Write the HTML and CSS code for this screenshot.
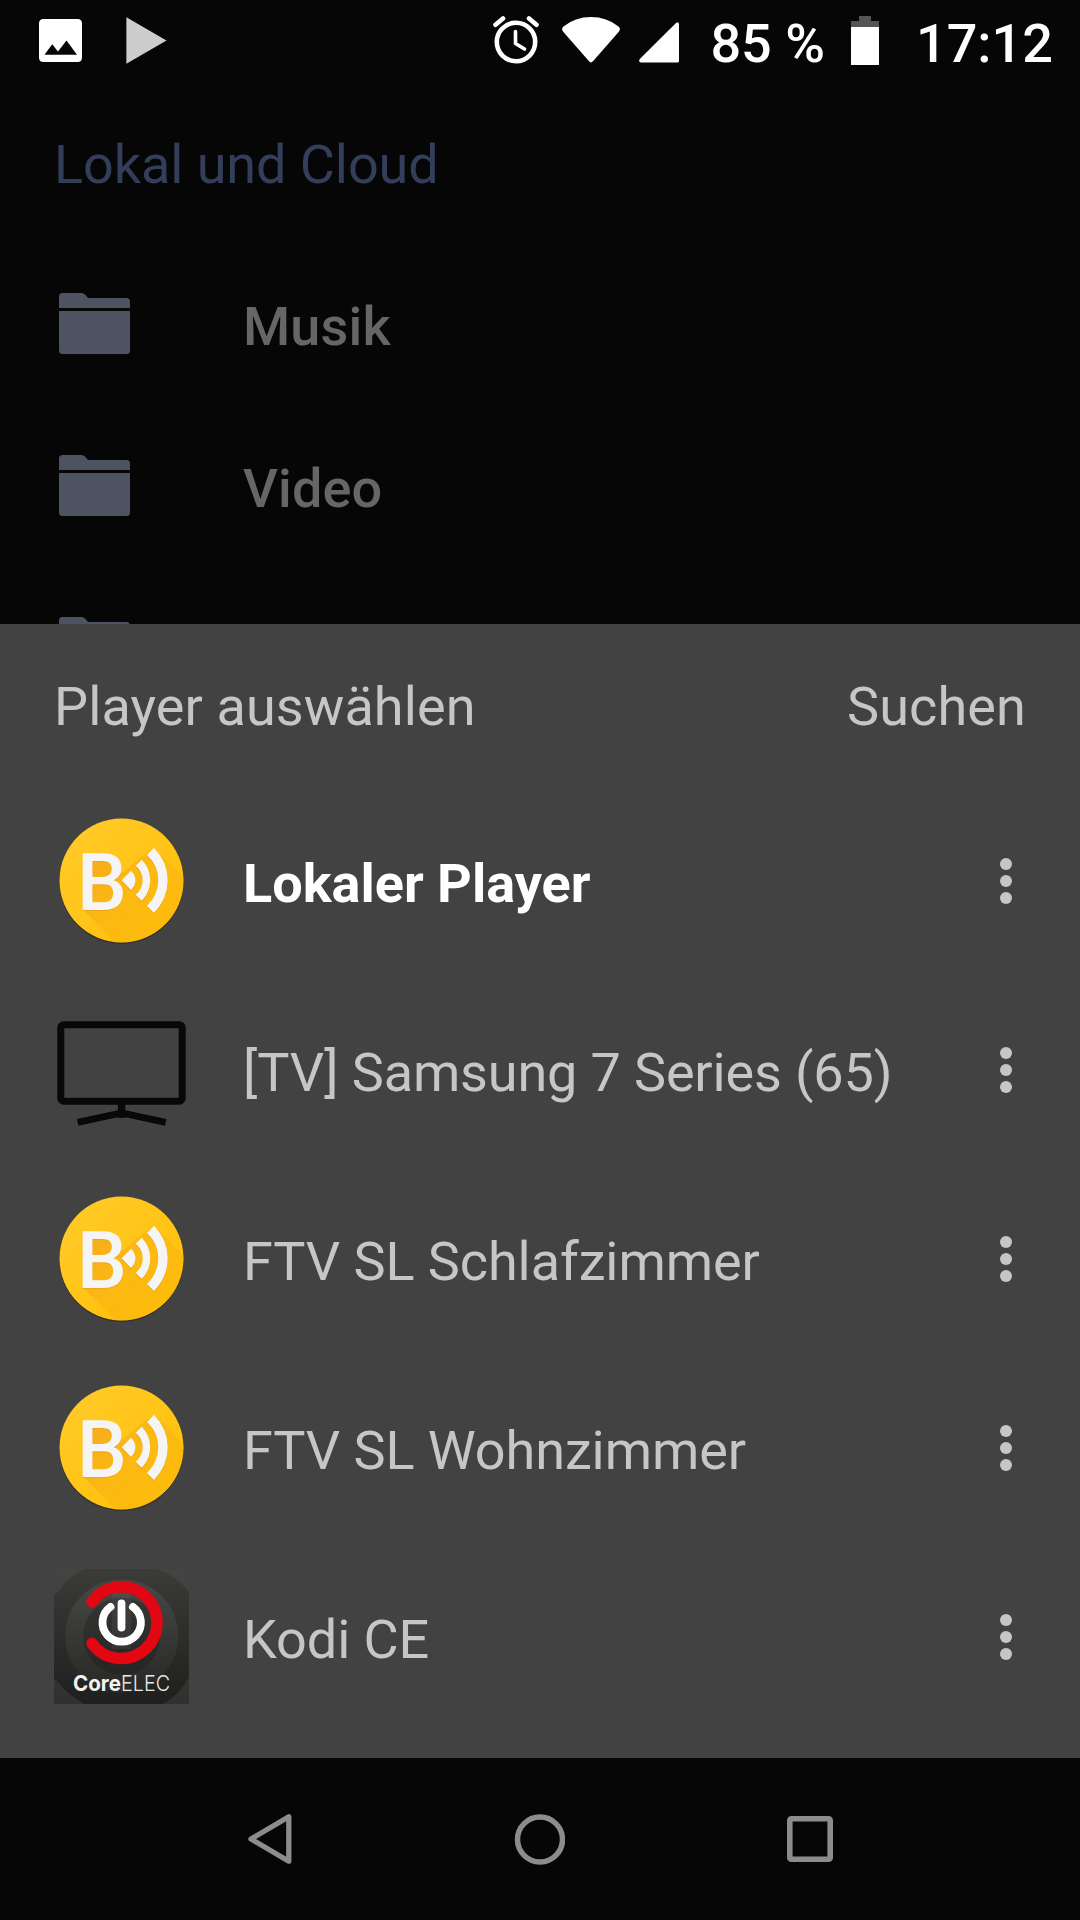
FILE: index.html
```html
<!DOCTYPE html>
<html lang="de">
<head>
<meta charset="utf-8">
<title>Player auswählen</title>
<link rel="stylesheet" href="styles.css">
</head>
<body>
<svg class="defs" width="0" height="0">
  <defs>
    <linearGradient id="gold" x1="0" y1="0" x2="1" y2="1"><stop offset="0.1" stop-color="#ffca28"/><stop offset="0.9" stop-color="#ffbf08"/></linearGradient>
    <linearGradient id="shade" gradientUnits="userSpaceOnUse" x1="35" y1="50" x2="110" y2="110"><stop offset="0" stop-color="#f2a01c" stop-opacity="0.7"/><stop offset="0.5" stop-color="#f7ae10" stop-opacity="0.5"/><stop offset="1" stop-color="#f9b40c" stop-opacity="0.4"/></linearGradient>
    <linearGradient id="slate" x1="0" y1="0" x2="0" y2="1"><stop offset="0" stop-color="#3b3b39"/><stop offset="1" stop-color="#1f1f1e"/></linearGradient>
    <linearGradient id="ring" x1="0" y1="0" x2="0" y2="1"><stop offset="0" stop-color="#454543"/><stop offset="1" stop-color="#2a2a29"/></linearGradient>
    <linearGradient id="tilebg" x1="0" y1="0" x2="0" y2="1"><stop offset="0" stop-color="#444442"/><stop offset="1" stop-color="#30302f"/></linearGradient>
    <clipPath id="disc"><circle cx="67.5" cy="67.5" r="62"/></clipPath>
    <clipPath id="tile"><rect width="135" height="135"/></clipPath>
    <symbol id="folder" viewBox="0 0 71 61">
      <path d="M0 15V3.5Q0 0 3.5 0H22.5Q24.500 0 26 1.500L29 5H67.500Q71 5 71 8.500V15ZM0 18H71V57.500Q71 61 67.500 61H3.500Q0 61 0 57.500Z" fill="#4d5361"/>
    </symbol>
    <symbol id="cast" viewBox="0 0 135 135">
      <circle cx="67.500" cy="69" r="62" fill="#000" opacity="0.18"/>
      <circle cx="67.500" cy="68.300" r="62.300" fill="#2e2a20" opacity="0.5"/>
      <circle cx="67.500" cy="67.500" r="62" fill="url(#gold)"/>
      <g clip-path="url(#disc)">
        <path d="M29 96.500L38 48H58L69 60L82 48L100 34.700L175 109V180H112Z" fill="url(#shade)"/>
      </g>
      <g fill="#e08a10" opacity="0.35" transform="translate(0 1.500)">
        <text class="cast-letter" x="23" y="96.500">B</text>
        <path d="M67.700 67.300L77 57.700Q81.400 62 81.400 67.300T77 77Z"/>
        <path d="M87.700 46.800Q96.200 55.300 96.200 67.300T87.700 87.800L81.700 81.800Q88.700 76 88.700 67.300T81.700 52.800Z"/>
        <path d="M100 34.700Q113.700 49 113.700 67.300T100 100L93 93Q104.300 82 104.300 67.300T93 42Z"/>
      </g>
      <g fill="#f5f5f5">
        <text class="cast-letter" x="23" y="96.500">B</text>
        <path d="M67.700 67.300L77 57.700Q81.400 62 81.400 67.300T77 77Z"/>
        <path d="M87.700 46.800Q96.200 55.300 96.200 67.300T87.700 87.800L81.700 81.800Q88.700 76 88.700 67.300T81.700 52.800Z"/>
        <path d="M100 34.700Q113.700 49 113.700 67.300T100 100L93 93Q104.300 82 104.300 67.300T93 42Z"/>
      </g>
    </symbol>
    <symbol id="dots" viewBox="0 0 12 46"><g fill="#c6c6c6"><circle cx="6" cy="6" r="6"/><circle cx="6" cy="23" r="6"/><circle cx="6" cy="40" r="6"/></g></symbol>
  </defs>
</svg>

<div class="screen">
  <header class="status">
    <div class="status-left">
      <svg width="43" height="43" viewBox="0 0 43 43"><path fill="#fff" fill-rule="evenodd" d="M4.500 0H38.500Q43 0 43 4.500V38.500Q43 43 38.500 43H4.500Q0 43 0 38.500V4.500Q0 0 4.500 0ZM5.500 35.700H38L27.500 21.500L19 32.500L13.200 25.300Z"/></svg>
      <svg width="41" height="47" viewBox="0 0 41 47"><path fill="#cdcdcd" d="M0.400 0.300L40.500 23.500L0.400 46.700Z"/></svg>
    </div>
    <div class="status-right">
      <svg class="alarm" width="46" height="48" viewBox="0 0 46 48" fill="none" stroke="#fff" stroke-linecap="round"><circle cx="23" cy="26" r="19.200" stroke-width="4.600"/><path d="M2.500 8.700L10 2.500M43.500 8.700L36 2.500" stroke-width="4.600"/><path d="M22.500 15.500V27.500L31.500 33" stroke-width="3.600" stroke-linejoin="round"/></svg>
      <svg class="wifi" width="58" height="46" viewBox="0 0 58 46"><path fill="#fff" d="M1 14.500Q-1 11.500 1.500 9.500Q13 0 29 0T56.500 9.500Q59 11.500 57 14.500L31 44.300Q29 46.500 27 44.300Z"/></svg>
      <svg class="signal" width="40" height="41" viewBox="0 0 40 41"><path fill="#fff" d="M40 2V39Q40 40.500 38.500 40.500H2Q-1 40 0.800 37L37 1Q39.500-0.800 40 2Z"/></svg>
      <span class="percent">85 %</span>
      <svg class="battery" width="28" height="49" viewBox="0 0 28 49"><path fill="#555" d="M8 0H20V5H28V11H0V5H8Z"/><path fill="#fff" d="M0 11H28V49H0Z"/></svg>
      <span class="clock">17:12</span>
    </div>
  </header>

  <main class="library">
    <h1 class="section-title">Lokal und Cloud</h1>
    <div class="folder-row"><svg width="71" height="61"><use href="#folder"/></svg><span>Musik</span></div>
    <div class="folder-row"><svg width="71" height="61"><use href="#folder"/></svg><span>Video</span></div>
    <div class="folder-row"><svg width="71" height="61"><use href="#folder"/></svg></div>
  </main>

  <section class="sheet">
    <div class="sheet-head"><span>Player auswählen</span><span>Suchen</span></div>
    <div class="player active"><svg width="135" height="135"><use href="#cast"/></svg><span class="name">Lokaler Player</span><svg width="12" height="46"><use href="#dots"/></svg></div>
    <div class="player">
      <svg width="135" height="135" viewBox="0 0 135 135" fill="none" stroke="#060809" stroke-width="7"><rect x="6.800" y="22.700" width="121.400" height="76.500" rx="3"/><path d="M67.600 100V115.700" stroke-width="7.500"/><path d="M23.700 120.300L64 111.700L67.600 112.300L71.300 111.700L111.700 120.300"/></svg>
      <span class="name tight">[TV] Samsung 7 Series (65)</span><svg width="12" height="46"><use href="#dots"/></svg>
    </div>
    <div class="player"><svg width="135" height="135"><use href="#cast"/></svg><span class="name">FTV SL Schlafzimmer</span><svg width="12" height="46"><use href="#dots"/></svg></div>
    <div class="player"><svg width="135" height="135"><use href="#cast"/></svg><span class="name">FTV SL Wohnzimmer</span><svg width="12" height="46"><use href="#dots"/></svg></div>
    <div class="player">
      <svg width="135" height="135" viewBox="0 0 135 135">
        <g clip-path="url(#tile)">
          <rect width="135" height="135" fill="url(#tilebg)"/>
          <path d="M0 26L5 22Q14 7 30 0H104Q122 7 135 23V108Q124 128 108 135H30Q14 126 5 114L0 110Z" fill="url(#slate)"/>
          <circle cx="67.700" cy="67" r="47.500" fill="none" stroke="url(#ring)" stroke-width="18"/>
          <path d="M58 18H77V80H58Z" fill="#fff" opacity="0.05"/>
        </g>
        <g fill="none" stroke-linecap="round">
          <path d="M38 32.900A35.800 35.800 0 1 1 38 74.500" stroke="#e30613" stroke-width="11.500"/>
          <path d="M56.500 37.900A19.200 19.200 0 1 0 78.900 37.900M67.500 34.500V58.500" stroke="#fff" stroke-width="7.800"/>
        </g>
        <text x="19" y="122" class="logo-bold" textLength="48" lengthAdjust="spacingAndGlyphs">Core</text>
        <text x="67" y="122" class="logo-light" textLength="49" lengthAdjust="spacingAndGlyphs">ELEC</text>
      </svg>
      <span class="name">Kodi CE</span><svg width="12" height="46"><use href="#dots"/></svg>
    </div>
  </section>

  <nav class="navbar">
    <svg width="44" height="52" viewBox="0 0 44 52"><path d="M40.800 3.800V48.200L3 26Z" fill="none" stroke="#8c8c8c" stroke-width="5.300" stroke-linejoin="round"/></svg>
    <svg width="51" height="51" viewBox="0 0 51 51"><circle cx="26" cy="25.500" r="22.500" fill="none" stroke="#8c8c8c" stroke-width="5.500"/></svg>
    <svg width="46" height="46" viewBox="0 0 46 46"><rect x="2.800" y="2.800" width="40.400" height="40.400" rx="1.500" fill="none" stroke="#8c8c8c" stroke-width="5.600"/></svg>
  </nav>
</div>
</body>
</html>
```
FILE: styles.css
```css
* { box-sizing: border-box; }
body { margin: 0; background: #060606; font-family: Roboto, "Liberation Sans", sans-serif; font-size: 54px; line-height: 64px; }
svg { display: block; flex: none; }
.defs { height: 0; }
.screen { width: 1080px; height: 1920px; overflow: hidden; display: flex; flex-direction: column; background: #060606; }
.status { height: 81px; flex: none; display: flex; justify-content: space-between; padding: 0 27px 0 39px; color: #fff; font-weight: 500; white-space: nowrap; }
.status-left { display: flex; gap: 44px; padding-top: 17px; }
.status-left svg:first-child { margin-top: 2px; }
.status-right { display: flex; align-items: flex-start; }
.alarm { margin-top: 16px; margin-right: 23px; }
.wifi { margin-top: 17px; margin-right: 19px; }
.signal { margin-top: 22px; margin-right: 31px; }
.percent { padding-top: 12px; margin-right: 26px; }
.battery { margin-top: 16px; margin-right: 37px; }
.clock { padding-top: 12px; }
.library { height: 543px; flex: none; overflow: hidden; }
.section-title { margin: 0; height: 162px; padding: 52px 54px 0; font-size: 54px; font-weight: 400; letter-spacing: -0.08px; color: #333e5b; }
.folder-row { height: 162px; display: flex; align-items: center; padding: 0 0 2px 59px; gap: 113px; color: #666; font-weight: 500; letter-spacing: 0.15px; }
.folder-row span { padding-top: 7px; }
.sheet { height: 1134px; flex: none; background: #424242; color: #c6c6c6; }
.sheet-head { height: 162px; display: flex; justify-content: space-between; padding: 51px 54px 0; letter-spacing: 0.1px; }
.player { height: 189px; display: flex; align-items: center; padding: 0 68px 0 54px; }
.name { flex: 1; padding: 6px 0 0 54px; white-space: nowrap; letter-spacing: -0.08px; }
.name.tight { letter-spacing: -0.15px; }
.active .name { color: #fff; font-weight: 700; letter-spacing: 0; }
.cast-letter { font-size: 79px; font-weight: 500; }
.logo-bold { font: 700 22px Inter, sans-serif; fill: #f2f2f2; }
.logo-light { font: 300 22px Inter, sans-serif; fill: #e8e8e8; }
.navbar { flex: 1; display: flex; align-items: center; justify-content: space-between; padding: 0 247px 0 248px; }
```
